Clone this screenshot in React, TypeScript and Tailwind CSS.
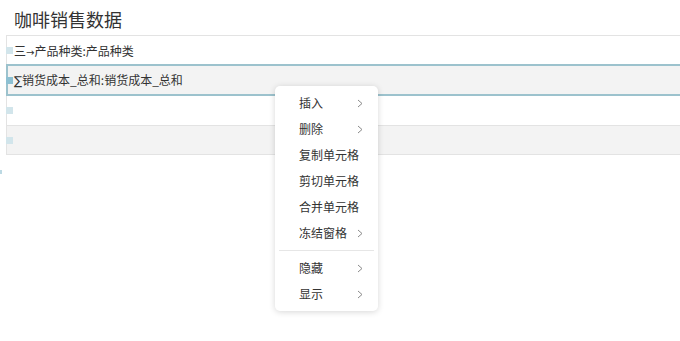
const font = { fontFamily: '"Microsoft YaHei", "Noto Sans CJK SC", "Noto Sans", sans-serif' }
const sym = { fontFamily: '"DejaVu Sans", "Liberation Sans", sans-serif' }

type MenuItem = { label: string; sub?: boolean; divider?: boolean }

const menuItems: MenuItem[] = [
  { label: '插入', sub: true },
  { label: '删除', sub: true },
  { label: '复制单元格' },
  { label: '剪切单元格' },
  { label: '合并单元格' },
  { label: '冻结窗格', sub: true },
  { label: '', divider: true },
  { label: '隐藏', sub: true },
  { label: '显示', sub: true },
]

function Chevron() {
  return (
    <svg width="6" height="9" viewBox="0 0 6 9" className="shrink-0">
      <polyline points="1,1 5,4.5 1,8" fill="none" stroke="#8a8a8a" strokeWidth="1" />
    </svg>
  )
}

function ContextMenu() {
  return (
    <div className="absolute left-[275px] top-[86px] w-[103px] rounded-[5px] bg-white py-[4px] shadow-[0_1px_6px_rgba(0,0,0,0.16)]">
      {menuItems.map((item, i) =>
        item.divider ? (
          <div key={i} className="mx-[4px] my-[4px] h-px bg-[#e6e6e6]" />
        ) : (
          <div key={i} className="flex h-[26px] items-center justify-between pl-[24px] pr-[15px] text-[12px] text-[#333]">
            <span>{item.label}</span>
            {item.sub && <Chevron />}
          </div>
        )
      )}
    </div>
  )
}

function Marker() {
  return <div className="-ml-px h-[7px] w-[7px] shrink-0 bg-[#d2e5eb]" />
}

export default function App() {
  return (
    <div className="relative h-[341px] w-[680px] overflow-hidden bg-white" style={font}>
      <div className="h-[35px] pl-[14px] pt-[7px] text-[18px] leading-[24px] text-[#333]">咖啡销售数据</div>
      <div className="ml-[6px] flex flex-col text-[12px] text-[#333]">
        <div className="flex h-[30px] items-center border-l border-t border-[#e3e3e3] bg-white">
          <Marker />
          <span className="ml-px">
            三<span style={sym} className="text-[10px]">→</span>产品种类:产品种类
          </span>
        </div>
        <div className="-mt-px flex h-[32px] items-center border-2 border-r-0 border-[#9cc2cd] bg-[#f3f3f3]">
          <div className="-ml-[2px] h-[7px] w-[7px] shrink-0 bg-[#8dc0d2]" />
          <span className="ml-px">
            <span style={sym}>∑</span>销货成本_总和:销货成本_总和
          </span>
        </div>
        <div className="flex h-[30px] items-center border-b border-l border-[#e3e3e3] bg-white">
          <Marker />
        </div>
        <div className="flex h-[29px] items-center border-b border-l border-[#e3e3e3] bg-[#f3f3f3]">
          <Marker />
        </div>
      </div>
      <div className="mt-[15px] h-[4px] w-[2px] bg-[#bcd9e3]" />
      <ContextMenu />
    </div>
  )
}
